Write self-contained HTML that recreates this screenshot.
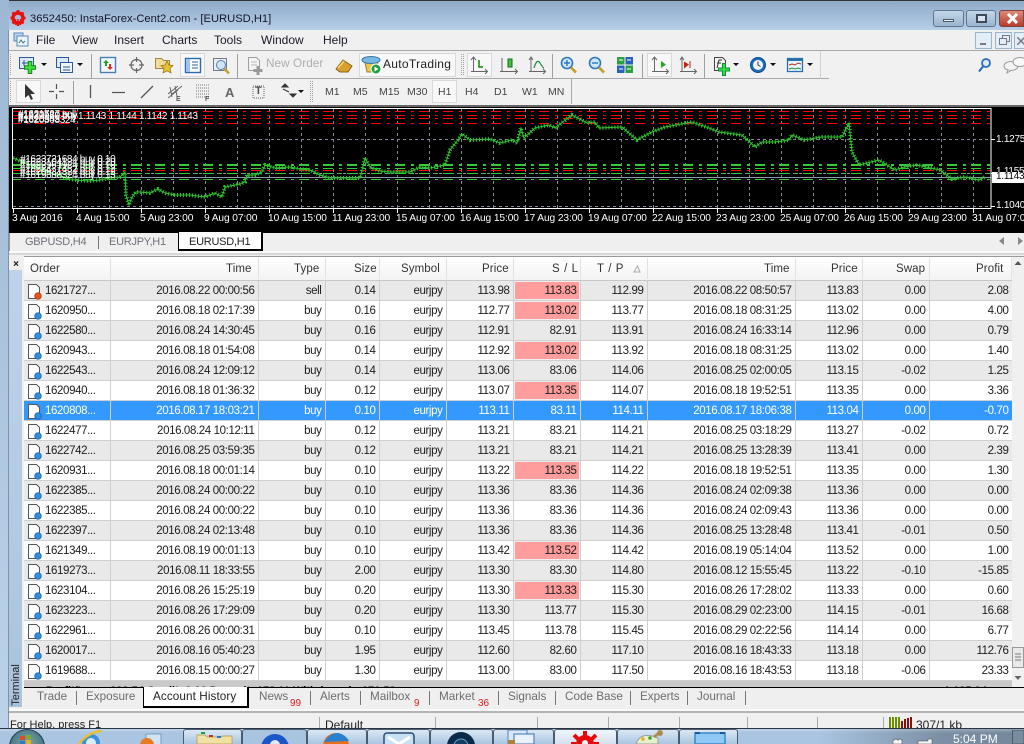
<!DOCTYPE html>
<html><head><meta charset="utf-8"><title>InstaForex</title>
<style>
html,body{margin:0;padding:0;width:1024px;height:744px;overflow:hidden;background:#f0f0f0}
body{position:relative;font-family:"Liberation Sans",sans-serif;font-size:11px;color:#222}
.a{position:absolute}
.t{position:absolute;white-space:nowrap}
.m{font-size:12px;top:33px;color:#1a1a2a}
.bx{position:absolute;background:#f8f8f8;border:1px solid #d8d8d8;box-sizing:border-box}
table{position:absolute;left:24px;top:281px;width:988px;border-collapse:collapse;table-layout:fixed;font-size:11.5px;letter-spacing:-.38px}
td{height:17px;padding:2px 3px 0 0;border-right:1px solid #cfcfcf;border-bottom:1px solid #cfcfcf;text-align:right;white-space:nowrap;overflow:hidden;color:#1c1c1c;line-height:17px}
td:first-child{text-align:left;padding:2px 0 0 21px;position:relative}
tr:nth-child(odd) td{background:#e9e9e9}
tr:nth-child(even) td{background:#fff}
tr.s td{background:#3399ff!important;color:#fff}
td.h{background:#ff9c9c!important;box-shadow:inset 0 0 0 1px #eee}
td svg{position:absolute;left:3px;top:2px}
.hd{position:absolute;top:263px;color:#333;font-size:11.5px;letter-spacing:.1px}
.hl{position:absolute;top:258px;height:21px;width:1px;background:#e2e2e2}
.tb{position:absolute;top:690px;color:#6d6d72;font-size:11.7px}
.sep{position:absolute;top:691px;width:1px;height:14px;background:#777}
.red{color:#e81818;font-size:10px;position:absolute}
.tk{position:absolute;top:729px;height:15px;box-sizing:border-box;border:1px solid #4a5c70;border-bottom:0;border-radius:3px 3px 0 0;background:linear-gradient(#dbe8f4,#a9c5e0)}
.x{font-size:10.2px;color:#fff;position:absolute;top:213px;white-space:nowrap;letter-spacing:-.1px}
.l{position:absolute;white-space:nowrap;color:#fff;font-size:10px;line-height:10px;letter-spacing:-.35px}
.p{position:absolute;white-space:nowrap;left:996px;font-size:10px;letter-spacing:-.25px}
.ct{position:absolute;top:236px;font-size:11px;letter-spacing:-.25px;color:#70707a;white-space:nowrap}
</style></head><body>

<!-- frame / title -->
<div class="a" style="left:0;top:0;width:1024px;height:30px;background:linear-gradient(#8fabc9,#b6cee6);border-top:1px solid #333;box-sizing:border-box"></div>
<div class="a" style="left:0;top:0;width:9px;height:744px;background:linear-gradient(#9db8d4,#bcd3ea)"></div>
<div class="a" style="left:8px;top:30px;width:1px;height:700px;background:#7f93a8"></div>
<div class="t" style="left:30px;top:13px;font-size:11.2px;color:#15152a">3652450: InstaForex-Cent2.com - [EURUSD,H1]</div>
<svg class="a" style="left:9px;top:9px" width="18" height="18" viewBox="0 0 18 18"><circle cx="9" cy="9" r="5" fill="none" stroke="#e81010" stroke-width="3.4"/><path d="M9 1v4M9 13v4M1.5 9h4M12.5 9h4M3.5 3.5l3 3M11.5 11.5l3 3M14.5 3.5l-3 3M6.5 11.5l-3 3" stroke="#e81010" stroke-width="2.6"/><path d="M6.5 10v6M9 10v6M11.5 10v6" stroke="#e81010" stroke-width="1.4"/></svg>

<!-- window buttons -->
<div class="a" style="left:933px;top:10px;width:31px;height:17px;box-sizing:border-box;border:1px solid #5f7690;border-radius:3px;background:linear-gradient(#c3d5e8,#9ab5d0)"><div class="a" style="left:9px;top:8px;width:11px;height:3px;background:#f4f4f4;border:1px solid #49596b;box-sizing:border-box"></div></div>
<div class="a" style="left:966px;top:10px;width:30px;height:17px;box-sizing:border-box;border:1px solid #5f7690;border-radius:3px;background:linear-gradient(#c3d5e8,#9ab5d0)"><div class="a" style="left:9px;top:3px;width:11px;height:9px;border:2px solid #3c4a5a;background:#d8e4f0;box-sizing:border-box"></div></div>
<div class="a" style="left:999px;top:10px;width:25px;height:17px;box-sizing:border-box;border:1px solid #80443c;border-radius:3px 0 0 3px;background:linear-gradient(#dd8a7c,#b83c2c)"><svg class="a" style="left:6px;top:2px" width="13" height="11"><path d="M2 1l9 9M11 1l-9 9" stroke="#fff" stroke-width="3"/></svg></div>

<!-- menu -->
<div class="a" style="left:9px;top:30px;width:1015px;height:20px;background:#f0f0f0"></div>
<svg class="a" style="left:13px;top:32px" width="16" height="15"><rect x="1" y="1" width="9" height="8" fill="#bcd6f0" stroke="#5a86b8"/><rect x="4" y="4" width="11" height="10" fill="#eaf2fa" stroke="#5a86b8"/><path d="M6 11l2-3 2 3 2-2" stroke="#478" fill="none"/></svg>
<div class="t m" style="left:36px">File</div><div class="t m" style="left:72px">View</div><div class="t m" style="left:114px">Insert</div><div class="t m" style="left:162px">Charts</div><div class="t m" style="left:214px">Tools</div><div class="t m" style="left:261px">Window</div><div class="t m" style="left:323px">Help</div>
<div class="a" style="left:975px;top:32px;width:17px;height:17px;box-sizing:border-box;border:1px solid #9ab4cc;background:#e4eef7"><div class="a" style="left:4px;top:10px;width:6px;height:2px;background:#778"></div></div>
<div class="a" style="left:995px;top:32px;width:17px;height:17px;box-sizing:border-box;border:1px solid #9ab4cc;background:#e4eef7"><div class="a" style="left:6px;top:2px;width:6px;height:5px;border:1px solid #778"></div><div class="a" style="left:3px;top:5px;width:6px;height:5px;border:1px solid #778;background:#e4eef7"></div></div>
<div class="a" style="left:1014px;top:32px;width:10px;height:17px;box-sizing:border-box;border:1px solid #9ab4cc;border-right:0;background:#e4eef7"><svg class="a" style="left:2px;top:4px" width="8" height="8"><path d="M0 0l8 8M8 0L0 8" stroke="#778" stroke-width="1.5"/></svg></div>

<!-- toolbars -->
<div class="a" style="left:9px;top:50px;width:1015px;height:1px;background:#a8a8a8"></div>
<div class="a" style="left:9px;top:51px;width:1015px;height:27px;background:#f1f1f1"></div>
<div class="a" style="left:9px;top:78px;width:820px;height:1px;background:#a8a8a8"></div>
<div class="a" style="left:820px;top:51px;width:1px;height:28px;background:#d0d0d0"></div>
<div class="a" style="left:9px;top:79px;width:1015px;height:26px;background:#f1f1f1"></div>
<div class="a" style="left:9px;top:105px;width:1015px;height:2px;background:#666"></div>
<div class="a" style="left:571px;top:79px;width:1px;height:25px;background:#a8a8a8"></div>
<div class="bx" style="left:180px;top:53px;width:25px;height:24px"></div>
<div class="bx" style="left:359px;top:53px;width:97px;height:24px"></div>
<div class="bx" style="left:467px;top:53px;width:25px;height:24px"></div>
<div class="bx" style="left:647px;top:53px;width:25px;height:24px"></div>
<div class="bx" style="left:16px;top:80px;width:25px;height:23px"></div>
<div class="bx" style="left:432px;top:80px;width:25px;height:23px"></div>

<svg class="a" style="left:0;top:50px" width="1024" height="56" viewBox="0 50 1024 56">
<g stroke="#a0a0a0"><path d="M8.5 54v22M10.5 54v22M461.5 54v22M463.5 54v22M8.5 81v22M10.5 81v22M310.5 81v22M312.5 81v22" stroke-dasharray="1 1"/><path d="M91.5 54v24M237.5 54v24M552.5 54v24M642.5 54v24M704.5 54v24M73.5 81v23"/></g>
<!-- new chart -->
<rect x="19.5" y="57.5" width="14" height="11" fill="#dce8f6" stroke="#2a5a9a"/><path d="M22 63h8M24 60v6" stroke="#2a5a9a"/><path d="M30 61v13M24 67.5h12" stroke="#128a12" stroke-width="4.5"/><path d="M30 62v11M25 67.5h10" stroke="#3fe03f" stroke-width="2.5"/>
<path d="M41 63h6l-3 3z M77 63h6l-3 3z" fill="#111"/>
<!-- profiles -->
<rect x="56.5" y="57.5" width="12" height="10" fill="#dce8f6" stroke="#2a5a9a"/><rect x="60.5" y="62.5" width="12" height="10" fill="#eef4fb" stroke="#2a5a9a"/><path d="M63 67h7M63 70h7" stroke="#2a5a9a"/>
<!-- market watch -->
<rect x="100.5" y="57.5" width="15" height="15" fill="#f2f7fc" stroke="#4a80b8" stroke-width="1.4"/><path d="M106 60l-3 3h2v3h2v-3h2z" fill="#20a020"/><path d="M110 70l3-3h-2v-3h-2v3h-2z" fill="#e03020"/>
<!-- crosshair -->
<circle cx="136.500" cy="65" r="5.500" fill="none" stroke="#666" stroke-width="1.2"/><path d="M136.500 57v5M136.500 68v5M129 65h5M139 65h5" stroke="#666" stroke-width="1.2"/>
<!-- folder star -->
<path d="M155.500 58.500h6l2 2h6v8h-14z" fill="#f2dc9a" stroke="#a08840"/><path d="M167 61l2 4 4 .5-3 3 1 4.500-4-2.200-4 2.200 1-4.500-3-3 4-.5z" fill="#e8c030" stroke="#907010" stroke-width=".7"/>
<!-- terminal -->
<rect x="185.500" y="58.500" width="15" height="14" fill="#fff" stroke="#2a6ab0" stroke-width="1.4"/><rect x="186" y="59" width="4" height="13" fill="#9cc4ec"/><path d="M192 62h6M192 65h6M192 68h6" stroke="#3060a0"/>
<!-- tester -->
<rect x="213.500" y="58.500" width="13" height="12" fill="#e8eef5" stroke="#707a88"/><circle cx="221" cy="65" r="4.500" fill="#cfe4f8" stroke="#5a7fa8"/><path d="M224 68.500l5 5" stroke="#c8a030" stroke-width="2.500"/>
<!-- new order -->
<path d="M248.500 57.500h8l3 3v10h-11z" fill="#f4f4f4" stroke="#a0a0a0"/><path d="M251 62h6M251 65h6" stroke="#b8b8b8"/><path d="M258 66v9M253.500 70.500h9" stroke="#9a9a9a" stroke-width="3"/>
<!-- metaeditor -->
<path d="M336 69l7-9 9 6-4 6-8 0z" fill="#d8a030" stroke="#8a6410"/><path d="M338 68l6-7" stroke="#f4d880" stroke-width="1.500"/>
<!-- autotrading -->
<path d="M364 58h14l-1 14h-10z" fill="#e8c850" stroke="#a08020"/><ellipse cx="371" cy="60" rx="9" ry="3.500" fill="#7ab8e4" stroke="#3a78a8"/><circle cx="376" cy="69" r="5" fill="#20a040" stroke="#fff"/><path d="M374.500 66.500l4 2.500-4 2.500z" fill="#fff"/>
<!-- chart types -->
<g fill="none" stroke="#666"><path d="M473.500 58v14M471 60l2.500-3 2.500 3M471 71.500h16M485 69l2.500 2.500-2.500 2.500"/><path d="M502 58v14M500 71.500h17M515 69l2.500 2.500-2.500 2.500"/><path d="M531 58v14M529 60l2-3 2 3M529 71.500h16M543 69l2.500 2.500-2.500 2.500"/><path d="M654.500 58v14M652 60l2.500-3 2.500 3M652 71.500h16M666 69l2.500 2.500-2.500 2.500"/><path d="M682 58v14M680 60l2-3 2 3M680 71.500h16M694 69l2.500 2.500-2.500 2.500"/></g>
<path d="M479 60v7h4" fill="none" stroke="#0a8a0a" stroke-width="1.500"/><rect x="508" y="59" width="4" height="8" fill="#40c040" stroke="#107010"/><path d="M534 68q3-10 6-5t4 5" fill="none" stroke="#128a3a" stroke-width="1.200"/>
<path d="M661 61l5 3.500-5 3.500z" fill="#22aa22"/><path d="M690 61v7" stroke="#c02010"/><path d="M692 64.500l-5-3v7z" fill="#c02010" transform="translate(-3 0)"/>
<!-- zoom -->
<circle cx="567" cy="63" r="5.500" fill="#cfe6fa" stroke="#2a78c0" stroke-width="1.600"/><path d="M564 63h6M567 60v6" stroke="#2a78c0" stroke-width="1.400"/><path d="M571 67.500l5 5" stroke="#c8a030" stroke-width="2.800"/>
<circle cx="595" cy="63" r="5.500" fill="#cfe6fa" stroke="#2a78c0" stroke-width="1.600"/><path d="M592 63h6" stroke="#2a78c0" stroke-width="1.400"/><path d="M599 67.500l5 5" stroke="#c8a030" stroke-width="2.800"/>
<!-- tile -->
<rect x="617" y="57" width="7.500" height="7.500" fill="#2aa040"/><rect x="625.500" y="57" width="7.500" height="7.500" fill="#2a60c0"/><rect x="617" y="65.500" width="7.500" height="7.500" fill="#2a60c0"/><rect x="625.500" y="65.500" width="7.500" height="7.500" fill="#2aa040"/><path d="M619 60h4M627 60h4M619 69h4M627 69h4" stroke="#fff"/>
<!-- indicators -->
<path d="M714.500 57.500h8l3 3v10h-11z" fill="#f4f4f4" stroke="#444"/><path d="M717 68l2-8h3M717 63h4" stroke="#333" fill="none"/><path d="M724 63v13M718 69.500h12" stroke="#128a3a" stroke-width="4"/><path d="M724 64v11M719 69.500h10" stroke="#30e040" stroke-width="2"/>
<path d="M733 63h6l-3 3zM770 63h6l-3 3zM807 63h6l-3 3z" fill="#111"/>
<!-- clock -->
<circle cx="758" cy="65" r="7.500" fill="#1c6cb8" stroke="#0a4a8c"/><circle cx="758" cy="65" r="5" fill="#eef4fa"/><path d="M758 61.500V65l2.500 1.500" stroke="#333" fill="none"/>
<!-- template -->
<rect x="787.500" y="58.500" width="15" height="13" fill="#eaf3fb" stroke="#2a70b0" stroke-width="1.300"/><rect x="788" y="59" width="14" height="2" fill="#2a70b0"/><path d="M789 65l3-1 3 1 3-2 3 1" stroke="#b03020" fill="none"/><path d="M789 69l3-1 3 1 3-1 3 1" stroke="#20903a" fill="none"/>
<!-- search/chat -->
<circle cx="986" cy="63" r="4" fill="#dcecfb" stroke="#2a6cc0" stroke-width="1.800"/><path d="M983 66.500l-4 5" stroke="#2a6cc0" stroke-width="2.200"/>
<ellipse cx="1011" cy="66" rx="7" ry="4.500" fill="#f4f4f4" stroke="#9a9a9a"/><ellipse cx="1020" cy="62" rx="7" ry="4.500" fill="#f8f8f8" stroke="#9a9a9a"/><path d="M1008 70l-1 3 4-2.500" fill="#eee" stroke="#9a9a9a"/>
<!-- tb2 -->
<path d="M25 84v14l3.500-3 2.500 5 2-1-2.500-5h4.500z" fill="#333"/>
<path d="M56.500 84v5M56.500 94v5M49 91.500h5M59 91.500h5" stroke="#555" stroke-width="1.200"/>
<path d="M90.500 85v13M112 92.500h13M141 98l12-12" stroke="#555" stroke-width="1.300"/>
<path d="M168 94l10-8M168 98l10-8M172 94l10-8M170 87l2 10M175 86l2 10" stroke="#666" fill="none"/>
<path d="M196 85h13M196 88h13M196 91h13M196 94h13M196 97h13" stroke="#777" stroke-dasharray="1 1"/>
<rect x="253" y="86" width="11" height="12" fill="none" stroke="#666" stroke-dasharray="1 1"/>
<path d="M282 87l3-3 3 3zM290 94l3 3 3-3zM283 89l6 3" fill="#333" stroke="#333"/><path d="M298 90h6l-3 3z" fill="#111"/>
</svg>
<div class="t" style="left:204px;top:96px;font-size:7px;font-weight:bold;color:#555;margin-left:1px">F</div>
<div class="t" style="left:176px;top:96px;font-size:7px;font-weight:bold;color:#555">E</div>
<div class="t" style="left:225px;top:85px;font-size:13px;font-weight:bold;color:#666">A</div>
<div class="t" style="left:255px;top:85px;font-size:11px;font-weight:bold;color:#555">T</div>
<div class="t" style="left:266px;top:57px;font-size:11.7px;color:#aeaeae;letter-spacing:.1px">New Order</div>
<div class="t" style="left:383px;top:57px;font-size:12px;color:#222;letter-spacing:.3px">AutoTrading</div>
<div class="t" style="left:325px;top:86px;font-size:10.5px;color:#444">M1</div><div class="t" style="left:353px;top:86px;font-size:10.500px;color:#444">M5</div><div class="t" style="left:379px;top:86px;font-size:10.500px;color:#444">M15</div><div class="t" style="left:407px;top:86px;font-size:10.500px;color:#444">M30</div><div class="t" style="left:438px;top:86px;font-size:10.500px;color:#444">H1</div><div class="t" style="left:465px;top:86px;font-size:10.500px;color:#444">H4</div><div class="t" style="left:494px;top:86px;font-size:10.500px;color:#444">D1</div><div class="t" style="left:522px;top:86px;font-size:10.500px;color:#444">W1</div><div class="t" style="left:548px;top:86px;font-size:10.500px;color:#444">MN</div>

<!-- chart -->
<div class="a" style="left:9px;top:107px;width:1015px;height:124px;background:#000"></div>
<svg class="a" style="left:9px;top:107px" width="1015" height="124" viewBox="9 107 1015 124">
<g stroke="#7f8a96" stroke-dasharray="3 3" fill="none"><path d="M13 139.500h978M13 173.500h978M13 206.500h978"/><path d="M45.500 109v99M77.500 109v99M109.500 109v99M141.500 109v99M173.500 109v99M205.500 109v99M237.500 109v99M269.500 109v99M301.500 109v99M333.500 109v99M365.500 109v99M397.500 109v99M429.500 109v99M461.500 109v99M493.500 109v99M525.500 109v99M557.500 109v99M589.500 109v99M621.500 109v99M653.500 109v99M685.500 109v99M717.500 109v99M749.500 109v99M781.500 109v99M813.500 109v99M845.500 109v99M877.500 109v99M909.500 109v99M941.500 109v99M973.500 109v99"/></g>
<g stroke="#ff0000" fill="none" stroke-dasharray="10 6 3 5" stroke-dashoffset="2"><path d="M13 111.500h978M13 115.500h978M13 118.500h978M13 123.500h978M13 170.500h978"/></g>
<g stroke="#33cc33" fill="none" stroke-dasharray="10 6 3 5" stroke-dashoffset="2"><path d="M13 164.500h978M13 165.500h978M13 168.500h978M13 173.500h978M13 179.500h978"/></g>
<path d="M13 177.500h978" stroke="#8a9aaa"/>
<path d="M13 158L30 165 50 172 65 178 75 180 90 181 100 180 110 178 120 177 125 172 126 195 129 205 132 197 136 192 140 192 150 193 158 189 165 193 175 195 190 195 205 197 215 193 222 197 225 187 240 184 245 182 247 175 255 175 262 172 265 165 275 168 290 167 300 169 310 170 320 175 330 178 340 178 360 178 365 158 370 167 380 171 390 172 410 172 420 167 430 168 445 165 450 150 458 140 462 134 470 140 490 139 500 143 512 140 517 143 521 128 524 138 535 128 549 125 555 128 572 115 587 123 595 122 599 128 622 127 637 140 652 132 665 127 692 122 709 128 719 132 742 135 755 147 762 142 775 142 789 140 792 135 804 140 822 137 842 137 849 123 852 152 859 165 879 160 895 170 904 167 917 165 940 170 952 179 965 177 979 180 985 177" fill="none" stroke="#2fc42f" stroke-width="1"/>
<path d="M13 158L30 165 50 172 65 178 75 180 90 181 100 180 110 178 120 177 125 172 126 195 129 205 132 197 136 192 140 192 150 193 158 189 165 193 175 195 190 195 205 197 215 193 222 197 225 187 240 184 245 182 247 175 255 175 262 172 265 165 275 168 290 167 300 169 310 170 320 175 330 178 340 178 360 178 365 158 370 167 380 171 390 172 410 172 420 167 430 168 445 165 450 150 458 140 462 134 470 140 490 139 500 143 512 140 517 143 521 128 524 138 535 128 549 125 555 128 572 115 587 123 595 122 599 128 622 127 637 140 652 132 665 127 692 122 709 128 719 132 742 135 755 147 762 142 775 142 789 140 792 135 804 140 822 137 842 137 849 123 852 152 859 165 879 160 895 170 904 167 917 165 940 170 952 179 965 177 979 180 985 177" fill="none" stroke="#2fc42f" stroke-width="4" stroke-dasharray="1 2"/>
<rect x="12.500" y="108.500" width="978.500" height="100" fill="none" stroke="#fff"/>
<path d="M13.500 209v4M77.500 209v4M141.500 209v4M205.500 209v4M269.500 209v4M333.500 209v4M397.500 209v4M461.500 209v4M525.500 209v4M589.500 209v4M653.500 209v4M717.500 209v4M781.500 209v4M845.500 209v4M909.500 209v4M973.500 209v4M991 139.500h4M991 173.500h4M991 206.500h4" stroke="#fff"/>
</svg>
<div class="l" style="left:18px;top:110px">#1621727 sell</div>
<div class="l" style="left:18px;top:112px">#1620950 buy</div>
<div class="l" style="left:18px;top:111px">#1622580 buy</div>
<div class="l" style="left:18px;top:115px">#1620943</div>
<div class="l" style="left:18px;top:116px">#1620808324</div>
<div class="t" style="left:78px;top:111px;color:#fff;font-size:10px;letter-spacing:-.3px;word-spacing:0">1.1143 1.1144 1.1142 1.1143</div>
<div class="l" style="left:20px;top:155px">#1623721684 buy 0.10</div>
<div class="l" style="left:20px;top:158px">#1623104124 buy 0.20</div>
<div class="l" style="left:20px;top:161px">#1622961924 buy 0.10</div>
<div class="l" style="left:20px;top:165px">#1622477432 buy 0.12</div>
<div class="l" style="left:20px;top:168px">#1620931324 buy 0.12</div>
<div class="l" style="left:20px;top:171px">#1619688324 buy 0.13</div>
<div class="x" style="left:12px">3 Aug 2016</div><div class="x" style="left:76px">4 Aug 15:00</div><div class="x" style="left:140px">5 Aug 23:00</div><div class="x" style="left:204px">9 Aug 07:00</div><div class="x" style="left:268px">10 Aug 15:00</div><div class="x" style="left:332px">11 Aug 23:00</div><div class="x" style="left:396px">15 Aug 07:00</div><div class="x" style="left:460px">16 Aug 15:00</div><div class="x" style="left:524px">17 Aug 23:00</div><div class="x" style="left:588px">19 Aug 07:00</div><div class="x" style="left:652px">22 Aug 15:00</div><div class="x" style="left:716px">23 Aug 23:00</div><div class="x" style="left:780px">25 Aug 07:00</div><div class="x" style="left:844px">26 Aug 15:00</div><div class="x" style="left:908px">29 Aug 23:00</div><div class="x" style="left:972px">31 Aug 07:00</div>
<div class="p" style="top:134px;color:#fff">1.1275</div>
<div class="p" style="top:166px;color:#fff">1.1155</div>
<div class="p" style="top:200px;color:#fff">1.1040</div>
<div class="a" style="left:992px;top:172px;width:32px;height:11px;background:#fff"></div>
<div class="p" style="top:171px;color:#000;line-height:12px">1.1143</div>

<!-- chart tabs -->
<div class="a" style="left:9px;top:231px;width:1015px;height:2px;background:#000"></div>
<div class="a" style="left:9px;top:233px;width:1015px;height:18px;background:#efefef"></div>
<div class="a" style="left:9px;top:233px;width:1px;height:18px;background:#999"></div>
<div class="ct" style="left:25px">GBPUSD,H4</div>
<div class="a" style="left:98px;top:236px;width:1px;height:13px;background:#777"></div>
<div class="ct" style="left:109px">EURJPY,H1</div>
<div class="a" style="left:178px;top:232px;width:85px;height:19px;box-sizing:border-box;background:#fff;border:1px solid #000;border-top:0;border-right-width:2px;border-bottom-width:2px"></div>
<div class="ct" style="left:189px;color:#222">EURUSD,H1</div>
<svg class="a" style="left:998px;top:236px" width="26" height="10"><path d="M6 1v8L1 5z" fill="#888"/><path d="M20 1v8l5-4z" fill="#888"/></svg>
<div class="a" style="left:9px;top:251px;width:1015px;height:2px;background:#fbfbfb"></div>
<div class="a" style="left:9px;top:253px;width:1015px;height:2px;background:#d8d8d8"></div>

<!-- terminal -->
<div class="a" style="left:9px;top:255px;width:15px;height:432px;background:#f0f0f0"></div>
<div class="a" style="left:9px;top:270px;width:13px;height:437px;background:linear-gradient(#bdd3ea,#aac3dd)"></div>
<div class="t" style="left:11px;top:261px;width:10px;font-size:10px;line-height:8px;font-weight:bold;color:#111;text-align:center">×</div>
<div class="t" style="left:-9px;top:679px;width:50px;text-align:center;font-size:11px;line-height:12px;color:#222;transform:rotate(-90deg)">Terminal</div>
<div class="a" style="left:24px;top:256px;width:1000px;height:1px;background:#999"></div>
<div class="a" style="left:24px;top:257px;width:988px;height:23px;background:linear-gradient(#fff,#f3f3f3)"></div>
<div class="a" style="left:24px;top:280px;width:988px;height:1px;background:#c8c8c8"></div>
<div class="hl" style="left:110px"></div><div class="hl" style="left:258px"></div><div class="hl" style="left:325px"></div><div class="hl" style="left:379px"></div><div class="hl" style="left:446px"></div><div class="hl" style="left:513px"></div><div class="hl" style="left:580px"></div><div class="hl" style="left:647px"></div><div class="hl" style="left:795px"></div><div class="hl" style="left:862px"></div><div class="hl" style="left:929px"></div><div class="hl" style="left:1011px"></div>
<div class="hd" style="left:226px">Time</div><div class="hd" style="left:30px">Order</div><div class="hd" style="left:294px">Type</div><div class="hd" style="left:354px">Size</div><div class="hd" style="left:401px">Symbol</div><div class="hd" style="left:482px">Price</div><div class="hd" style="left:552px;letter-spacing:.6px">S / L</div><div class="hd" style="left:597px;letter-spacing:.6px">T / P</div><div class="hd" style="left:764px">Time</div><div class="hd" style="left:831px">Price</div><div class="hd" style="left:896px">Swap</div><div class="hd" style="left:976px">Profit</div>
<svg class="a" style="left:633px;top:265px" width="8" height="8"><path d="M1 7h6L4.500 1z" fill="none" stroke="#aaa"/></svg>

<svg width="0" height="0" style="position:absolute"><defs>
<symbol id="b" viewBox="0 0 15 17"><path d="M1.500 1.500h8l3 3v11h-11z" fill="#fff" stroke="#555"/><circle cx="11" cy="13" r="3.300" fill="#2a8fe0" stroke="#1a5a9a" stroke-width=".7"/></symbol>
<symbol id="o" viewBox="0 0 15 17"><path d="M1.500 1.500h8l3 3v11h-11z" fill="#fff" stroke="#555"/><circle cx="11" cy="13" r="3.300" fill="#e8501c" stroke="#a03010" stroke-width=".7"/></symbol>
</defs></svg>

<table>
<colgroup><col style="width:86px"><col style="width:148px"><col style="width:67px"><col style="width:54px"><col style="width:67px"><col style="width:67px"><col style="width:67px"><col style="width:67px"><col style="width:148px"><col style="width:67px"><col style="width:67px"><col style="width:83px"></colgroup>
<tr><td><svg width="15" height="17"><use href="#o"/></svg>1621727...</td><td>2016.08.22 00:00:56</td><td>sell</td><td>0.14</td><td>eurjpy</td><td>113.98</td><td class="h">113.83</td><td>112.99</td><td>2016.08.22 08:50:57</td><td>113.83</td><td>0.00</td><td>2.08</td></tr>
<tr><td><svg width="15" height="17"><use href="#b"/></svg>1620950...</td><td>2016.08.18 02:17:39</td><td>buy</td><td>0.16</td><td>eurjpy</td><td>112.77</td><td class="h">113.02</td><td>113.77</td><td>2016.08.18 08:31:25</td><td>113.02</td><td>0.00</td><td>4.00</td></tr>
<tr><td><svg width="15" height="17"><use href="#b"/></svg>1622580...</td><td>2016.08.24 14:30:45</td><td>buy</td><td>0.16</td><td>eurjpy</td><td>112.91</td><td>82.91</td><td>113.91</td><td>2016.08.24 16:33:14</td><td>112.96</td><td>0.00</td><td>0.79</td></tr>
<tr><td><svg width="15" height="17"><use href="#b"/></svg>1620943...</td><td>2016.08.18 01:54:08</td><td>buy</td><td>0.14</td><td>eurjpy</td><td>112.92</td><td class="h">113.02</td><td>113.92</td><td>2016.08.18 08:31:25</td><td>113.02</td><td>0.00</td><td>1.40</td></tr>
<tr><td><svg width="15" height="17"><use href="#b"/></svg>1622543...</td><td>2016.08.24 12:09:12</td><td>buy</td><td>0.14</td><td>eurjpy</td><td>113.06</td><td>83.06</td><td>114.06</td><td>2016.08.25 02:00:05</td><td>113.15</td><td>-0.02</td><td>1.25</td></tr>
<tr><td><svg width="15" height="17"><use href="#b"/></svg>1620940...</td><td>2016.08.18 01:36:32</td><td>buy</td><td>0.12</td><td>eurjpy</td><td>113.07</td><td class="h">113.35</td><td>114.07</td><td>2016.08.18 19:52:51</td><td>113.35</td><td>0.00</td><td>3.36</td></tr>
<tr class="s"><td><svg width="15" height="17"><use href="#b"/></svg>1620808...</td><td>2016.08.17 18:03:21</td><td>buy</td><td>0.10</td><td>eurjpy</td><td>113.11</td><td>83.11</td><td>114.11</td><td>2016.08.17 18:06:38</td><td>113.04</td><td>0.00</td><td>-0.70</td></tr>
<tr><td><svg width="15" height="17"><use href="#b"/></svg>1622477...</td><td>2016.08.24 10:12:11</td><td>buy</td><td>0.12</td><td>eurjpy</td><td>113.21</td><td>83.21</td><td>114.21</td><td>2016.08.25 03:18:29</td><td>113.27</td><td>-0.02</td><td>0.72</td></tr>
<tr><td><svg width="15" height="17"><use href="#b"/></svg>1622742...</td><td>2016.08.25 03:59:35</td><td>buy</td><td>0.12</td><td>eurjpy</td><td>113.21</td><td>83.21</td><td>114.21</td><td>2016.08.25 13:28:39</td><td>113.41</td><td>0.00</td><td>2.39</td></tr>
<tr><td><svg width="15" height="17"><use href="#b"/></svg>1620931...</td><td>2016.08.18 00:01:14</td><td>buy</td><td>0.10</td><td>eurjpy</td><td>113.22</td><td class="h">113.35</td><td>114.22</td><td>2016.08.18 19:52:51</td><td>113.35</td><td>0.00</td><td>1.30</td></tr>
<tr><td><svg width="15" height="17"><use href="#b"/></svg>1622385...</td><td>2016.08.24 00:00:22</td><td>buy</td><td>0.10</td><td>eurjpy</td><td>113.36</td><td>83.36</td><td>114.36</td><td>2016.08.24 02:09:38</td><td>113.36</td><td>0.00</td><td>0.00</td></tr>
<tr><td><svg width="15" height="17"><use href="#b"/></svg>1622385...</td><td>2016.08.24 00:00:22</td><td>buy</td><td>0.10</td><td>eurjpy</td><td>113.36</td><td>83.36</td><td>114.36</td><td>2016.08.24 02:09:43</td><td>113.36</td><td>0.00</td><td>0.00</td></tr>
<tr><td><svg width="15" height="17"><use href="#b"/></svg>1622397...</td><td>2016.08.24 02:13:48</td><td>buy</td><td>0.10</td><td>eurjpy</td><td>113.36</td><td>83.36</td><td>114.36</td><td>2016.08.25 13:28:48</td><td>113.41</td><td>-0.01</td><td>0.50</td></tr>
<tr><td><svg width="15" height="17"><use href="#b"/></svg>1621349...</td><td>2016.08.19 00:01:13</td><td>buy</td><td>0.10</td><td>eurjpy</td><td>113.42</td><td class="h">113.52</td><td>114.42</td><td>2016.08.19 05:14:04</td><td>113.52</td><td>0.00</td><td>1.00</td></tr>
<tr><td><svg width="15" height="17"><use href="#b"/></svg>1619273...</td><td>2016.08.11 18:33:55</td><td>buy</td><td>2.00</td><td>eurjpy</td><td>113.30</td><td>83.30</td><td>114.80</td><td>2016.08.12 15:55:45</td><td>113.22</td><td>-0.10</td><td>-15.85</td></tr>
<tr><td><svg width="15" height="17"><use href="#b"/></svg>1623104...</td><td>2016.08.26 15:25:19</td><td>buy</td><td>0.20</td><td>eurjpy</td><td>113.30</td><td class="h">113.33</td><td>115.30</td><td>2016.08.26 17:28:02</td><td>113.33</td><td>0.00</td><td>0.60</td></tr>
<tr><td><svg width="15" height="17"><use href="#b"/></svg>1623223...</td><td>2016.08.26 17:29:09</td><td>buy</td><td>0.20</td><td>eurjpy</td><td>113.30</td><td>113.77</td><td>115.30</td><td>2016.08.29 02:23:00</td><td>114.15</td><td>-0.01</td><td>16.68</td></tr>
<tr><td><svg width="15" height="17"><use href="#b"/></svg>1622961...</td><td>2016.08.26 00:00:31</td><td>buy</td><td>0.10</td><td>eurjpy</td><td>113.45</td><td>113.78</td><td>115.45</td><td>2016.08.29 02:22:56</td><td>114.14</td><td>0.00</td><td>6.77</td></tr>
<tr><td><svg width="15" height="17"><use href="#b"/></svg>1620017...</td><td>2016.08.16 05:40:23</td><td>buy</td><td>1.95</td><td>eurjpy</td><td>112.60</td><td>82.60</td><td>117.10</td><td>2016.08.16 18:43:33</td><td>113.18</td><td>0.00</td><td>112.76</td></tr>
<tr><td><svg width="15" height="17"><use href="#b"/></svg>1619688...</td><td>2016.08.15 00:00:27</td><td>buy</td><td>1.30</td><td>eurjpy</td><td>113.00</td><td>83.00</td><td>117.50</td><td>2016.08.16 18:43:53</td><td>113.18</td><td>-0.06</td><td>23.33</td></tr>
</table>

<!-- summary cut -->
<div class="a" style="left:24px;top:681px;width:988px;height:6px;background:#c9c9c9;overflow:hidden"><div class="t" style="left:22px;top:4px;font-weight:bold;color:#000">Profit/Loss: 293.54  Credit: 0.00  Deposit: 178.11  Withdrawal: -371.53</div><div class="t" style="left:920px;top:4px;font-weight:bold;color:#000">1 135.94</div></div>
<!-- scrollbar -->
<div class="a" style="left:1012px;top:257px;width:12px;height:430px;background:#f0f0f0"></div>
<svg class="a" style="left:1012px;top:257px" width="12" height="430"><path d="M2.500 8h7L6 4z" fill="#555"/><path d="M2.500 419h7L6 423z" fill="#666"/><rect x=".5" y="390.500" width="11" height="20" fill="#e9e9e9" stroke="#999"/><path d="M3 397h6M3 400h6M3 403h6" stroke="#777"/></svg>

<!-- bottom tabs -->
<div class="a" style="left:24px;top:687px;width:1000px;height:1px;background:#000"></div>
<div class="a" style="left:24px;top:688px;width:1000px;height:21px;background:#efefef"></div>
<div class="a" style="left:143px;top:687px;width:106px;height:21px;box-sizing:border-box;background:#fff;border:1px solid #000;border-top:0;border-right-width:2px;border-bottom-width:2px"></div>
<div class="tb" style="left:37px">Trade</div><div class="sep" style="left:76px"></div>
<div class="tb" style="left:86px">Exposure</div>
<div class="tb" style="left:153px;color:#222;letter-spacing:.1px">Account History</div>
<div class="tb" style="left:259px">News</div><div class="red" style="left:290px;top:698px">99</div><div class="sep" style="left:310px"></div>
<div class="tb" style="left:320px">Alerts</div><div class="sep" style="left:360px"></div>
<div class="tb" style="left:370px">Mailbox</div><div class="red" style="left:414px;top:698px">9</div><div class="sep" style="left:429px"></div>
<div class="tb" style="left:439px">Market</div><div class="red" style="left:478px;top:698px">36</div><div class="sep" style="left:498px"></div>
<div class="tb" style="left:508px">Signals</div><div class="sep" style="left:555px"></div>
<div class="tb" style="left:565px">Code Base</div><div class="sep" style="left:630px"></div>
<div class="tb" style="left:640px">Experts</div><div class="sep" style="left:687px"></div>
<div class="tb" style="left:697px">Journal</div><div class="sep" style="left:745px"></div>
<div class="a" style="left:9px;top:709px;width:1015px;height:2px;background:#fafafa"></div>
<div class="a" style="left:9px;top:711px;width:1015px;height:2px;background:#b4b4b4"></div>

<!-- status -->
<div class="a" style="left:9px;top:713px;width:1015px;height:15px;background:#f0f0f0"></div>
<div class="t" style="left:10px;top:718px;font-size:11px;line-height:14px;color:#222">For Help, press F1</div>
<div class="t" style="left:325px;top:718px;font-size:12px;line-height:14px;color:#222">Default</div>
<svg class="a" style="left:0;top:713px" width="1024" height="15"><path d="M319.500 4v11M435.500 4v11M537.500 4v11M608.500 4v11M679.500 4v11M747.500 4v11M817.500 4v11M883.500 4v11" stroke="#aaa"/><g fill="#6a8a00"><rect x="889" y="4" width="2" height="11"/><rect x="892" y="4" width="2" height="11"/><rect x="895" y="4" width="2" height="11"/><rect x="898" y="4" width="2" height="11"/></g><g fill="#8a1010"><rect x="901" y="8" width="2" height="7"/><rect x="904" y="6" width="2" height="9"/><rect x="907" y="5" width="2" height="10"/><rect x="910" y="4" width="2" height="11"/></g></svg>
<div class="t" style="left:916px;top:718px;font-size:12px;line-height:14px;color:#222">307/1 kb</div>

<!-- taskbar -->
<div class="a" style="left:0;top:728px;width:1024px;height:16px;background:linear-gradient(90deg,#a9c5e2 0%,#a9c5e2 80%,#7b8fa4 92%,#74879b 100%);border-top:1px solid #2a3442;box-sizing:border-box"></div>
<div class="a" style="left:0;top:729px;width:1024px;height:4px;background:linear-gradient(rgba(255,255,255,.25),rgba(255,255,255,0))"></div>
<div class="a" style="left:9px;top:729px;width:36px;height:36px;border-radius:50%;background:radial-gradient(circle at 50% 40%,#7ea8a0,#2a5a7a);border:1px solid #26384c;box-sizing:border-box"></div>
<svg class="a" style="left:20px;top:735px" width="12" height="9"><rect x="0" y="1" width="5" height="4" fill="#e04a20"/><rect x="6" y="0" width="5" height="4" fill="#7ab030"/><rect x="0" y="6" width="5" height="3" fill="#2a78d0"/><rect x="6" y="5" width="5" height="4" fill="#e8b020"/></svg>
<svg class="a" style="left:76px;top:730px" width="30" height="14"><circle cx="15" cy="13" r="9" fill="#3a90e0"/><circle cx="15" cy="13" r="5" fill="#d8ecfa"/><path d="M3 14Q12 2 26 1" fill="none" stroke="#e8c030" stroke-width="2.500"/></svg>
<svg class="a" style="left:136px;top:733px" width="28" height="11"><rect x="10" y="1" width="15" height="11" fill="#d0e4f6" stroke="#7a9ab8"/><circle cx="11" cy="12" r="7" fill="#e87a20"/></svg>
<div class="tk" style="left:183px;width:59px"></div>
<div class="tk" style="left:242px;width:65px;background:linear-gradient(#a8c4e0,#a8c4e0)"></div>
<div class="tk" style="left:307px;width:60px"></div>
<div class="tk" style="left:367px;width:63px"></div>
<div class="tk" style="left:430px;width:63px"></div>
<div class="tk" style="left:493px;width:61px"></div>
<div class="tk" style="left:554px;width:63px;background:linear-gradient(#f0f5fa,#d5e2ef)"></div>
<div class="tk" style="left:617px;width:62px"></div>
<div class="tk" style="left:679px;width:59px"></div>
<svg class="a" style="left:0;top:730px" width="1024" height="14">
<path d="M197 5h8l2 2h14l2-1h9v8h-35z" fill="#f0e0a4" stroke="#b09848" stroke-width=".7"/><rect x="201" y="2" width="4" height="2" fill="#20a040"/><rect x="209" y="5" width="4" height="2" fill="#c03020"/><rect x="217" y="6" width="4" height="2" fill="#2a78d0"/>
<circle cx="275" cy="18" r="14" fill="#1a56c8"/><circle cx="275" cy="15" r="5" fill="#dfe9f8"/>
<circle cx="336" cy="16" r="13" fill="#e8701c"/><path d="M324 12q6-9 14-9 7 1 11 8" fill="#2a80d0"/>
<rect x="384" y="3" width="30" height="16" rx="3" fill="#c8e0f4" stroke="#2a4a70" stroke-width="1.500"/><path d="M388 7l11 7 11-7" fill="none" stroke="#fff" stroke-width="3"/>
<circle cx="461" cy="16" r="14" fill="#0a2a4a"/><circle cx="461" cy="16" r="7" fill="#123d64" stroke="#6aa0c8"/>
<rect x="508" y="0" width="19" height="14" fill="#d8e8f8" stroke="#4a88c8"/><rect x="514" y="4" width="20" height="10" fill="#e8f2fc" stroke="#3a70b0"/><path d="M508 10h7v4h-7z" fill="#b0803a"/>
<circle cx="585" cy="14" r="9" fill="#e80808"/><path d="M585 1v6M574 5l4 4M596 5l-4 4M571 14h5M594 14h5" stroke="#e80808" stroke-width="4"/><circle cx="585" cy="13" r="3" fill="#eaf0f6"/>
<path d="M636 14q4-11 16-8l6 2v6z" fill="#e8f0c8" stroke="#90a0a8"/><circle cx="643" cy="9" r="1.800" fill="#e8b020"/><circle cx="650" cy="8" r="1.800" fill="#40a040"/><path d="M654 7l5-4" stroke="#b08a50" stroke-width="3"/><circle cx="660" cy="3" r="3" fill="#b08a50"/>
<rect x="695" y="3" width="30" height="11" fill="#8ec8f4" stroke="#3a88c8" stroke-width="1.500"/><path d="M695 3h5M720 3h5" stroke="#1a5a9a" stroke-width="2"/>
<path d="M893 14v-4h2v-1h2v1h2v-1h2v1h1v4zM918 14v-3h10v-2h4v5z" fill="#f4f4f4" stroke="#444" stroke-width=".5"/>
<rect x="1012.500" y="0" width="11.500" height="14" fill="#7a8c9f" stroke="#4a5a6c"/>
</svg>
<div class="t" style="left:953px;top:732px;font-size:12px;color:#fff">5:04 PM</div>

</body></html>
